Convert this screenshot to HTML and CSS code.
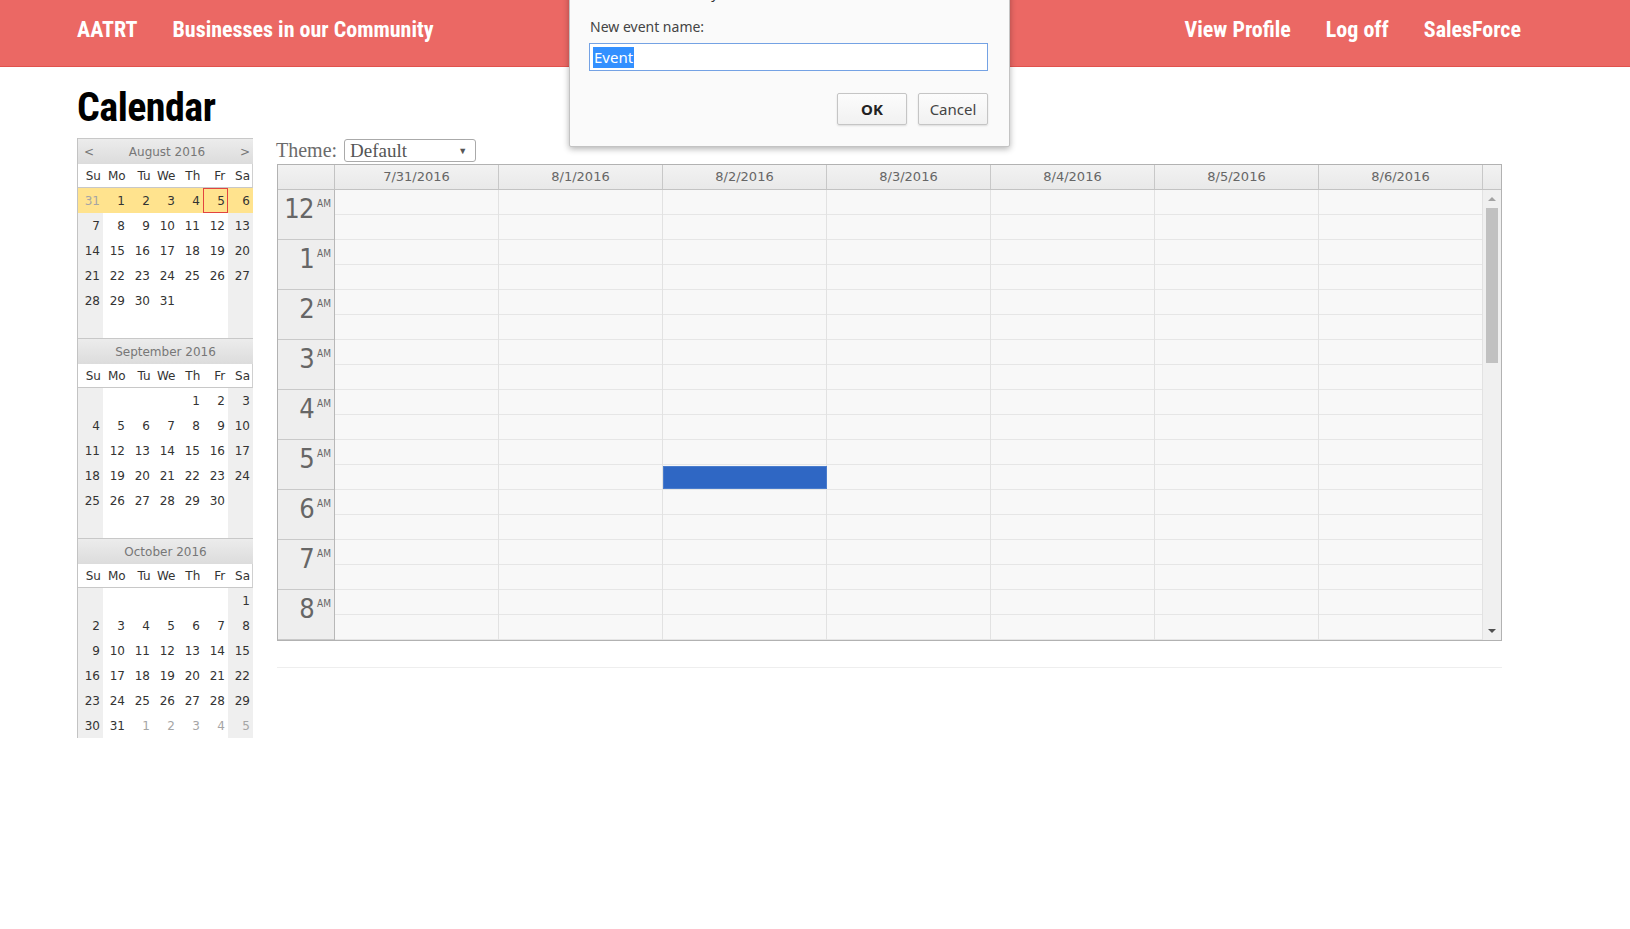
FILE: index.html
```html
<!DOCTYPE html>
<html lang="en">
<head>
<meta charset="utf-8">
<title>Calendar</title>
<link rel="stylesheet" href="styles.css">
</head>
<body>
<header class="topbar">
  <nav class="nav">
    <a href="#">AATRT</a>
    <a href="#">Businesses in our Community</a>
  </nav>
  <nav class="nav">
    <a href="#">View Profile</a>
    <a href="#">Log off</a>
    <a href="#">SalesForce</a>
  </nav>
</header>

<main class="page">
  <h1 class="title">Calendar</h1>
  <div class="content">
    <aside class="navigator">
      <section class="month">
        <div class="month-title first"><span>&lt;</span><span>August 2016</span><span>&gt;</span></div>
        <div class="dow"><span>Su</span><span>Mo</span><span>Tu</span><span>We</span><span>Th</span><span>Fr</span><span>Sa</span></div>
        <div class="week sel"><span class="we om">31</span><span>1</span><span>2</span><span>3</span><span>4</span><span class="today">5</span><span class="we">6</span></div>
        <div class="week"><span class="we">7</span><span>8</span><span>9</span><span>10</span><span>11</span><span>12</span><span class="we">13</span></div>
        <div class="week"><span class="we">14</span><span>15</span><span>16</span><span>17</span><span>18</span><span>19</span><span class="we">20</span></div>
        <div class="week"><span class="we">21</span><span>22</span><span>23</span><span>24</span><span>25</span><span>26</span><span class="we">27</span></div>
        <div class="week"><span class="we">28</span><span>29</span><span>30</span><span>31</span><span></span><span></span><span class="we"></span></div>
        <div class="week"><span class="we"></span><span></span><span></span><span></span><span></span><span></span><span class="we"></span></div>
      </section>
      <section class="month">
        <div class="month-title"><span>September 2016</span></div>
        <div class="dow"><span>Su</span><span>Mo</span><span>Tu</span><span>We</span><span>Th</span><span>Fr</span><span>Sa</span></div>
        <div class="week"><span class="we"></span><span></span><span></span><span></span><span>1</span><span>2</span><span class="we">3</span></div>
        <div class="week"><span class="we">4</span><span>5</span><span>6</span><span>7</span><span>8</span><span>9</span><span class="we">10</span></div>
        <div class="week"><span class="we">11</span><span>12</span><span>13</span><span>14</span><span>15</span><span>16</span><span class="we">17</span></div>
        <div class="week"><span class="we">18</span><span>19</span><span>20</span><span>21</span><span>22</span><span>23</span><span class="we">24</span></div>
        <div class="week"><span class="we">25</span><span>26</span><span>27</span><span>28</span><span>29</span><span>30</span><span class="we"></span></div>
        <div class="week"><span class="we"></span><span></span><span></span><span></span><span></span><span></span><span class="we"></span></div>
      </section>
      <section class="month">
        <div class="month-title"><span>October 2016</span></div>
        <div class="dow"><span>Su</span><span>Mo</span><span>Tu</span><span>We</span><span>Th</span><span>Fr</span><span>Sa</span></div>
        <div class="week"><span class="we"></span><span></span><span></span><span></span><span></span><span></span><span class="we">1</span></div>
        <div class="week"><span class="we">2</span><span>3</span><span>4</span><span>5</span><span>6</span><span>7</span><span class="we">8</span></div>
        <div class="week"><span class="we">9</span><span>10</span><span>11</span><span>12</span><span>13</span><span>14</span><span class="we">15</span></div>
        <div class="week"><span class="we">16</span><span>17</span><span>18</span><span>19</span><span>20</span><span>21</span><span class="we">22</span></div>
        <div class="week"><span class="we">23</span><span>24</span><span>25</span><span>26</span><span>27</span><span>28</span><span class="we">29</span></div>
        <div class="week last"><span class="we">30</span><span>31</span><span class="om">1</span><span class="om">2</span><span class="om">3</span><span class="om">4</span><span class="we om">5</span></div>
      </section>
    </aside>

    <div class="scheduler">
      <div class="theme-row">
        <label class="theme-label">Theme:</label>
        <div class="select"><span>Default</span><span class="caret">&#9660;</span></div>
      </div>
      <div class="cal">
        <div class="cal-head">
          <div class="corner"></div>
          <div class="col-head">7/31/2016</div>
          <div class="col-head">8/1/2016</div>
          <div class="col-head">8/2/2016</div>
          <div class="col-head">8/3/2016</div>
          <div class="col-head">8/4/2016</div>
          <div class="col-head">8/5/2016</div>
          <div class="col-head">8/6/2016</div>
          <div class="scroll-corner"></div>
        </div>
        <div class="cal-body">
          <div class="time-col">
            <div class="time-cell"><span class="hr">12</span><span class="ampm">AM</span></div>
            <div class="time-cell"><span class="hr">1</span><span class="ampm">AM</span></div>
            <div class="time-cell"><span class="hr">2</span><span class="ampm">AM</span></div>
            <div class="time-cell"><span class="hr">3</span><span class="ampm">AM</span></div>
            <div class="time-cell"><span class="hr">4</span><span class="ampm">AM</span></div>
            <div class="time-cell"><span class="hr">5</span><span class="ampm">AM</span></div>
            <div class="time-cell"><span class="hr">6</span><span class="ampm">AM</span></div>
            <div class="time-cell"><span class="hr">7</span><span class="ampm">AM</span></div>
            <div class="time-cell"><span class="hr">8</span><span class="ampm">AM</span></div>
          </div>
          <div class="day"></div>
          <div class="day"></div>
          <div class="day"><div class="event"></div></div>
          <div class="day"></div>
          <div class="day"></div>
          <div class="day"></div>
          <div class="day"></div>
          <div class="vscroll">
            <div class="arrow-box"><span class="arrow-up"></span></div>
            <div class="thumb"></div>
            <div class="spacer"></div>
            <div class="arrow-box"><span class="arrow-down"></span></div>
          </div>
        </div>
      </div>
      <hr class="rule">
    </div>
  </div>
</main>

<div class="dialog">
  <div class="dlg-title">localhost:44300 says:</div>
  <div class="dlg-label">New event name:</div>
  <div class="dlg-input"><span class="sel-text">Event</span></div>
  <div class="dlg-actions">
    <button class="btn ok" type="button">OK</button>
    <button class="btn" type="button">Cancel</button>
  </div>
</div>
</body>
</html>
```

FILE: styles.css
```css
* { box-sizing: border-box; }

body {
  margin: 0;
  background: #fff;
  color: #222;
  font-family: "Liberation Serif", serif;
}

/* ---------- top bar ---------- */
.topbar {
  display: flex;
  justify-content: space-between;
  align-items: center;
  height: 67px;
  padding: 0 109px 8px 77px;
  background: #eb6864;
  border-bottom: 1px solid #e0524d;
}
.nav {
  display: flex;
  gap: 35px;
}
.nav a {
  color: #fff;
  text-decoration: none;
  font-family: Roboto, "Liberation Sans", sans-serif;
  font-stretch: 75%;
  font-weight: 700;
  font-size: 22px;
  letter-spacing: 0;
}

/* ---------- page ---------- */
.page {
  padding-left: 77px;
  position: relative;
}
.title {
  margin: 16px 0 5px;
  font-family: Roboto, "Liberation Sans", sans-serif;
  font-stretch: 75%;
  font-weight: 700;
  font-size: 40px;
  line-height: 50px;
  letter-spacing: -0.5px;
  color: #000;
}
.content {
  display: flex;
  align-items: flex-start;
  gap: 24px;
}

/* ---------- navigator ---------- */
.navigator {
  width: 176px;
  border-left: 1px solid #c3c3c3;
  font-family: "DejaVu Sans", sans-serif;
  font-size: 12px;
  color: #333;
}
.month-title {
  height: 26px;
  border-top: 1px solid #c8c8c8;
  background: linear-gradient(#ececec, #dcdcdc);
  display: flex;
  justify-content: center;
  align-items: center;
  color: #777;
}
.month-title.first {
  justify-content: space-between;
  padding: 0 3px 0 6px;
}
.dow {
  display: flex;
  height: 24px;
  background: #fff;
  border-bottom: 1px solid #c8c8c8;
  border-right: 1px solid #d0d0d0;
}
.dow span {
  width: 25px;
  text-align: right;
  padding-right: 2px;
  line-height: 24px;
}
.week {
  display: flex;
  height: 25px;
}
.week span {
  width: 25px;
  height: 25px;
  text-align: right;
  padding-right: 3px;
  line-height: 26px;
  background: #fff;
}
.week span.we { background: #efefef; }
.week.sel span { background: #ffe38e; }
.week span.om { color: #a5a5a5; }
.week span.today {
  border: 1px solid #e2443f;
  line-height: 24px;
  padding-right: 2px;
}

/* ---------- scheduler ---------- */
.scheduler {
  width: 1225px;
}
.theme-row {
  display: flex;
  align-items: center;
  gap: 7px;
  height: 23px;
  margin: 1px 0 2px -1px;
}
.theme-label {
  font-family: "Liberation Serif", serif;
  font-size: 20px;
  color: #6b6b6b;
}
.select {
  width: 132px;
  height: 23px;
  border: 1px solid #aaa;
  border-radius: 3px;
  background: #fff;
  display: flex;
  justify-content: space-between;
  align-items: center;
  padding: 0 8px 0 5px;
  font-family: "Liberation Serif", serif;
  font-size: 19px;
  color: #555;
}
.caret {
  font-size: 9px;
  color: #555;
}

.cal {
  border: 1px solid #b2b2b2;
  background: #f8f8f8;
}
.cal-head {
  display: flex;
  height: 25px;
  border-bottom: 1px solid #c3c3c3;
  background: linear-gradient(#f2f2f2, #e9e9e9);
}
.corner {
  width: 57px;
  border-right: 1px solid #c3c3c3;
}
.col-head {
  width: 164px;
  border-right: 1px solid #c8c8c8;
  text-align: center;
  font-family: "DejaVu Sans", sans-serif;
  font-size: 13px;
  line-height: 23px;
  color: #666;
}
.scroll-corner {
  width: 18px;
}

.cal-body {
  display: flex;
  height: 450px;
  overflow: hidden;
}
.time-col {
  width: 57px;
  border-right: 1px solid #b8b8b8;
  background: #eeeeee;
}
.time-cell {
  height: 50px;
  border-bottom: 1px solid #c9c9c9;
  display: flex;
  justify-content: flex-end;
  align-items: flex-start;
  padding: 5px 3px 0 0;
  color: #666;
}
.hr {
  font-family: "DejaVu Sans Condensed", "DejaVu Sans", sans-serif;
  font-size: 27px;
  line-height: 27px;
  letter-spacing: -0.5px;
}
.ampm {
  font-family: "DejaVu Sans Condensed", "DejaVu Sans", sans-serif;
  font-size: 10px;
  line-height: 10px;
  margin: 4px 0 0 3px;
}
.day {
  position: relative;
  width: 164px;
  border-right: 1px solid #e2e2e2;
  background: repeating-linear-gradient(to bottom, #f8f8f8 0, #f8f8f8 24px, #e6e6e6 24px, #e6e6e6 25px);
}
.event {
  position: absolute;
  top: 276px;
  left: 0;
  width: 164px;
  height: 23px;
  background: #2f67c4;
  border: 1px solid #4a7ccc;
}
.vscroll {
  width: 18px;
  background: #f0f0f0;
  display: flex;
  flex-direction: column;
  align-items: center;
}
.arrow-box {
  height: 18px;
  width: 100%;
  display: flex;
  justify-content: center;
  align-items: center;
}
.arrow-up {
  width: 0;
  height: 0;
  border-left: 4px solid transparent;
  border-right: 4px solid transparent;
  border-bottom: 4px solid #a3a3a3;
}
.arrow-down {
  width: 0;
  height: 0;
  border-left: 4px solid transparent;
  border-right: 4px solid transparent;
  border-top: 4px solid #505050;
}
.thumb {
  width: 12px;
  height: 155px;
  background: #c1c1c1;
}
.spacer { flex: 1; }

.rule {
  border: 0;
  border-top: 1px solid #eee;
  margin: 26px 0 0;
}

/* ---------- prompt dialog ---------- */
.dialog {
  position: absolute;
  left: 569px;
  top: -18px;
  width: 441px;
  padding: 0 21px 21px 19px;
  background: #fafafa;
  border: 1px solid #c3c3c3;
  border-radius: 2px;
  box-shadow: 0 2px 6px rgba(0, 0, 0, 0.3);
  font-family: "Noto Sans", "Open Sans", sans-serif;
}
.dlg-title {
  height: 20px;
  line-height: 20px;
  font-size: 14px;
  color: #333;
  padding-left: 1px;
}
.dlg-label {
  margin-top: 15px;
  padding-left: 1px;
  font-size: 14px;
  line-height: 18px;
  color: #444;
}
.dlg-input {
  margin-top: 7px;
  height: 28px;
  border: 1px solid #74a2e4;
  background: #fff;
  display: flex;
  align-items: center;
  padding-left: 3px;
}
.sel-text {
  background: #3390ff;
  color: #fff;
  font-size: 15px;
  line-height: 21px;
  padding: 0 1px;
}
.dlg-actions {
  margin-top: 22px;
  display: flex;
  justify-content: flex-end;
  gap: 11px;
}
.btn {
  width: 70px;
  height: 32px;
  border: 1px solid #c5c5c5;
  border-radius: 2px;
  background: linear-gradient(#fcfcfc, #f1f1f1);
  box-shadow: 0 1px 2px rgba(0, 0, 0, 0.12);
  font-family: "Noto Sans", "Open Sans", sans-serif;
  font-size: 15px;
  color: #444;
  padding: 0;
}
.btn.ok {
  font-weight: bold;
  color: #222;
}
```
